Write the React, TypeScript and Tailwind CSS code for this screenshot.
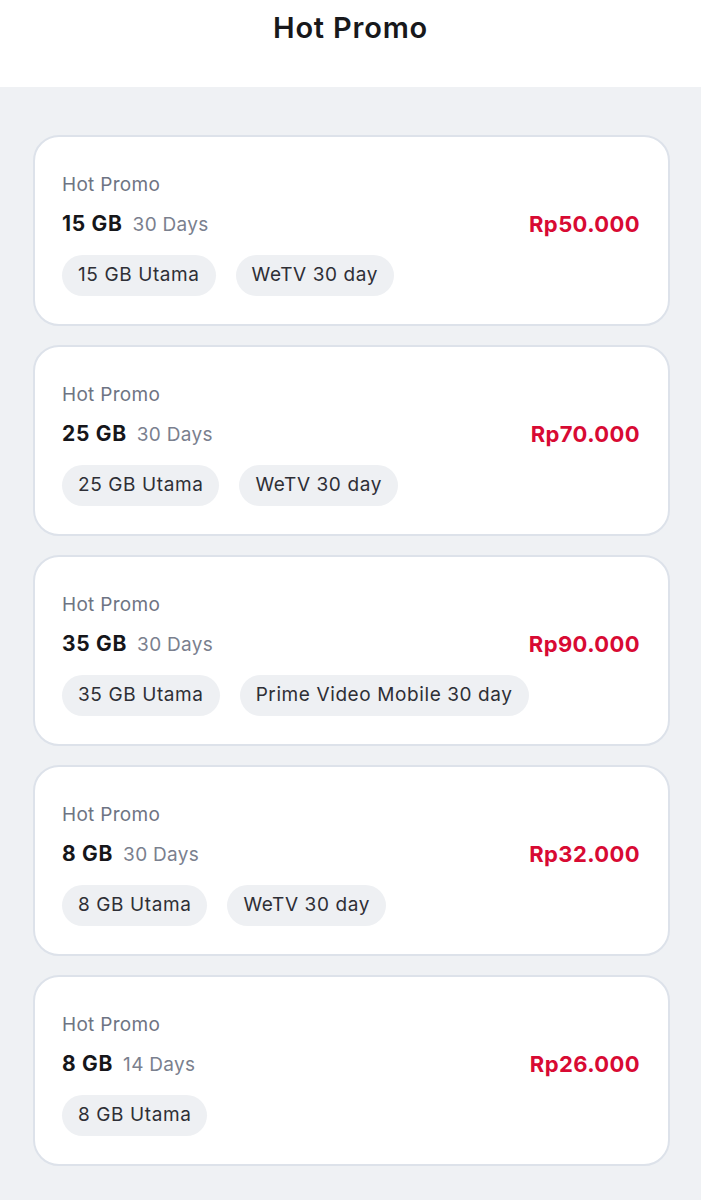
import React from 'react';

type Promo = {
  size: string;
  days: string;
  price: string;
  chips: string[];
};

const promos: Promo[] = [
  { size: '15 GB', days: '30 Days', price: 'Rp50.000', chips: ['15 GB Utama', 'WeTV 30 day'] },
  { size: '25 GB', days: '30 Days', price: 'Rp70.000', chips: ['25 GB Utama', 'WeTV 30 day'] },
  { size: '35 GB', days: '30 Days', price: 'Rp90.000', chips: ['35 GB Utama', 'Prime Video Mobile 30 day'] },
  { size: '8 GB', days: '30 Days', price: 'Rp32.000', chips: ['8 GB Utama', 'WeTV 30 day'] },
  { size: '8 GB', days: '14 Days', price: 'Rp26.000', chips: ['8 GB Utama'] },
];

const PromoCard = ({ promo }: { promo: Promo }) => (
  <div className="bg-white border-2 border-[#dde2ea] rounded-[26px] pl-[27px] pr-[28px] pt-[35px] pb-[28px]">
    <div className="text-[19px] leading-[26px] tracking-[0.3px] text-[#6e7483]">Hot Promo</div>
    <div className="flex items-center justify-between mt-[10px]">
      <div className="flex items-baseline gap-[10px]">
        <span className="text-[21px] leading-[26px] font-bold tracking-[0.7px] text-[#16161a]">{promo.size}</span>
        <span className="text-[19px] leading-[26px] tracking-[0.3px] text-[#7a808e]">{promo.days}</span>
      </div>
      <span className="text-[22px] font-bold tracking-[0.4px] text-[#d80a33]">{promo.price}</span>
    </div>
    <div className="flex gap-[20px] mt-[14px]">
      {promo.chips.map((c) => (
        <span
          key={c}
          className="h-[41px] flex items-center px-[16px] rounded-full bg-[#eef0f3] text-[19px] tracking-[0.6px] text-[#2e2f36]"
        >
          {c}
        </span>
      ))}
    </div>
  </div>
);

export default function App() {
  return (
    <div className="min-h-[1200px] bg-[#eff1f4] font-['Inter','Open_Sans',sans-serif]">
      <header className="h-[87px] bg-white flex justify-center pt-[10px]">
        <h1 className="text-[29px] leading-[36px] font-semibold tracking-[0.8px] text-[#18181b]">Hot Promo</h1>
      </header>
      <main className="flex flex-col gap-[19px] pl-[33px] pr-[31px] pt-[48px] pb-[40px]">
        {promos.map((p, i) => (
          <PromoCard key={i} promo={p} />
        ))}
      </main>
    </div>
  );
}
